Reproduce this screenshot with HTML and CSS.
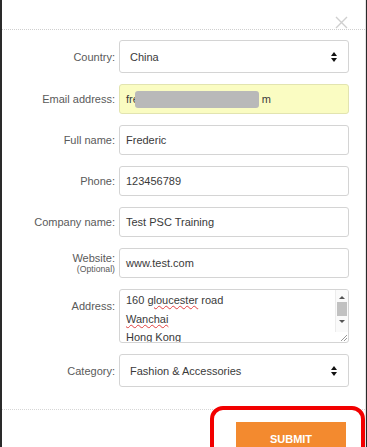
FILE: index.html
```html
<!DOCTYPE html>
<html lang="en">
<head>
    <meta charset="UTF-8">
    <meta name="viewport" content="width=device-width, initial-scale=1.0">
    <title>Contact details</title>
    <link rel="stylesheet" href="styles.css">
</head>
<body>
    <div class="modal">
        <div class="modal-header">
            <span class="close">
                <svg width="13" height="13" viewBox="0 0 13 13"><path d="M1 1 L12 12 M12 1 L1 12" stroke="#cfcfcf" stroke-width="1.4" fill="none"/></svg>
            </span>
        </div>
        <div class="form">
            <div class="row">
                <div class="label">Country:</div>
                <div class="field select">China
                    <svg class="arrows" width="6" height="10" viewBox="0 0 6 10"><path d="M3 0 L6 4 L0 4 Z M0 6 L6 6 L3 10 Z" fill="#111"/></svg>
                </div>
            </div>
            <div class="row">
                <div class="label">Email address:</div>
                <div class="field email">fre<span class="redact"></span>m</div>
            </div>
            <div class="row">
                <div class="label">Full name:</div>
                <div class="field">Frederic</div>
            </div>
            <div class="row">
                <div class="label">Phone:</div>
                <div class="field">123456789</div>
            </div>
            <div class="row">
                <div class="label">Company name:</div>
                <div class="field">Test PSC Training</div>
            </div>
            <div class="row">
                <div class="label">Website:<span class="hint">(Optional)</span></div>
                <div class="field">www.test.com</div>
            </div>
            <div class="row">
                <div class="label top">Address:</div>
                <div class="field textarea">
                    <div>160 <span class="typo">gloucester</span> road</div>
                    <div><span class="typo">Wanchai</span></div>
                    <div>Hong Kong</div>
                    <div class="scrollbar">
                        <span class="up"></span>
                        <span class="thumb"></span>
                        <span class="down"></span>
                    </div>
                    <svg class="grip" width="12" height="10" viewBox="0 0 12 10"><path d="M11 3 L5 9 M11 6 L8 9" stroke="#999" stroke-width="1"/></svg>
                </div>
            </div>
            <div class="row">
                <div class="label">Category:</div>
                <div class="field select">Fashion &amp; Accessories
                    <svg class="arrows" width="6" height="10" viewBox="0 0 6 10"><path d="M3 0 L6 4 L0 4 Z M0 6 L6 6 L3 10 Z" fill="#111"/></svg>
                </div>
            </div>
        </div>
        <div class="modal-footer">
            <button class="submit">SUBMIT</button>
        </div>
        <div class="highlight"></div>
    </div>
</body>
</html>
```

FILE: styles.css
```css
body {
    margin: 0;
    padding: 0;
    background-color: #2a2a2a;
    font-family: "Liberation Sans", Arial, sans-serif;
    font-size: 11px;
    overflow: hidden;
}
.modal {
    position: relative;
    margin: 0 1px 0 2px;
    height: 447px;
    background-color: #fff;
    border-right: 1px solid #e4e4e4;
    overflow: hidden;
}
.modal-header {
    height: 29px;
    border-bottom: 1px dotted #cfcfcf;
    display: flex;
    justify-content: flex-end;
    align-items: flex-end;
    padding-right: 17px;
}
.close svg {
    display: block;
}
.form {
    padding-top: 10px;
    display: flex;
    flex-direction: column;
    gap: 11px;
}
.row {
    display: grid;
    grid-template-columns: 113px 230px;
    column-gap: 4px;
    align-items: center;
}
.label {
    color: #5a5a5a;
    text-align: right;
    display: flex;
    flex-direction: column;
    align-items: flex-end;
    line-height: 12px;
}
.label.top {
    align-self: start;
    padding-top: 11px;
}
.hint {
    font-size: 8.7px;
    line-height: 11px;
}
.field {
    box-sizing: border-box;
    height: 30px;
    border: 1px solid #d4d4d4;
    border-radius: 3px;
    padding: 0 6px;
    color: #3a3a3a;
    display: flex;
    align-items: center;
}
.select {
    height: 33px;
    padding: 0 11px 0 10px;
    justify-content: space-between;
}
.email {
    background-color: #fafcc2;
    border-color: #e2e4b0;
}
.redact {
    display: inline-block;
    width: 124px;
    height: 17px;
    margin: 0 3px 0 -4px;
    border-radius: 3px;
    background-color: #b9b9b9;
}
.textarea {
    position: relative;
    height: 54px;
    display: block;
    padding-top: 1px;
    line-height: 18.5px;
    overflow: hidden;
}
.typo {
    text-decoration: underline wavy #e04040;
    text-decoration-thickness: 1px;
    text-underline-offset: 1px;
}
.scrollbar {
    position: absolute;
    top: 0;
    right: 0;
    width: 12px;
    height: 42px;
    background-color: #fafafa;
    border-left: 1px solid #ececec;
    display: flex;
    flex-direction: column;
    align-items: center;
}
.up, .down {
    width: 0;
    height: 0;
    border-left: 3px solid transparent;
    border-right: 3px solid transparent;
    margin-top: 6px;
}
.up {
    border-bottom: 3px solid #555;
}
.down {
    border-top: 3px solid #555;
    margin-top: 4px;
}
.thumb {
    width: 10px;
    height: 14px;
    margin-top: 3px;
    background-color: #c1c1c1;
}
.grip {
    position: absolute;
    right: 0;
    bottom: 0;
}
.modal-footer {
    margin-top: 22px;
    border-top: 1px dotted #d6d6d6;
    padding: 12px 19px 0 0;
    display: flex;
    justify-content: flex-end;
}
.submit {
    position: relative;
    z-index: 2;
    width: 110px;
    height: 34px;
    border: none;
    border-radius: 0;
    background-color: #f38a2f;
    color: #fff;
    font-family: "Liberation Sans", Arial, sans-serif;
    font-size: 11px;
    font-weight: bold;
    padding: 0;
}
.highlight {
    position: absolute;
    z-index: 1;
    left: 208px;
    top: 406px;
    width: 155px;
    height: 70px;
    box-sizing: border-box;
    border: 4px solid #f20000;
    border-radius: 13px;
    background-color: #fff;
}
```
